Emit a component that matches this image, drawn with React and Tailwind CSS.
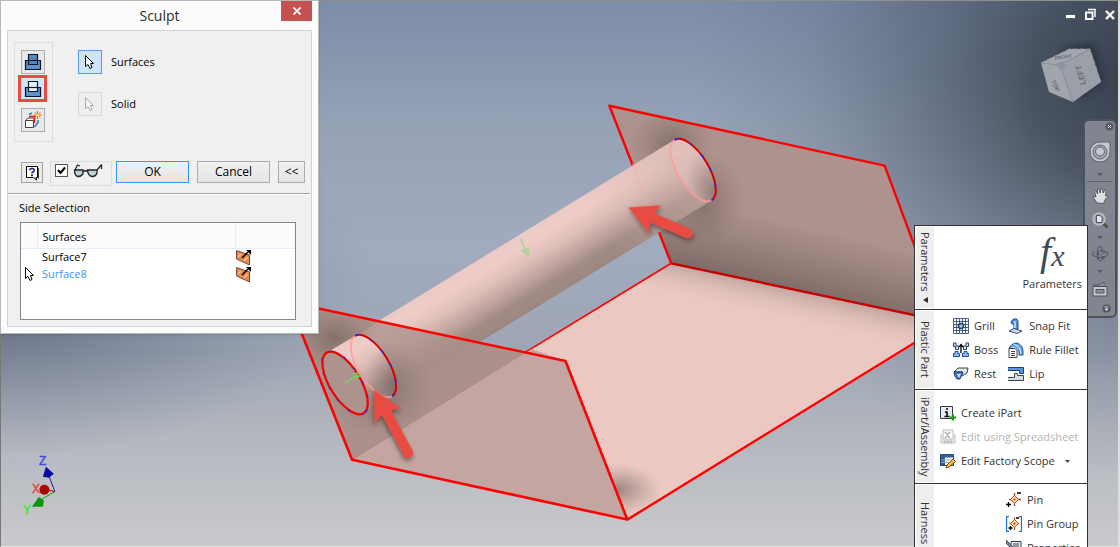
import { useState } from "react";

const BACK_PLATE = "610,105 886,165 944,321 672,263";
const FLOOR = "672,263 1000,334 1000,292 1120,220 628,520 352,460";
const FRONT_PLATE = "289,302 566,361 628,520 352,460";

function Ring({ cx, cy }) {
  return (
    <g transform={`translate(${cx} ${cy}) rotate(58.5)`} fill="none">
      <path d="M35.5 0A35.5 15.4 0 0 1 -35.5 0" stroke="#ff9a98" strokeWidth="2" opacity="0.75" />
      <path d="M-35.5 0A35.5 15.4 0 0 1 35.5 0" stroke="#d40000" strokeWidth="2" />
      <path d="M-35.5 0A35.5 15.4 0 0 1 35.5 0" stroke="#1530ff" strokeWidth="1.6" strokeDasharray="4 13 2 13" />
    </g>
  );
}

function Callout({ x, y, angle, length }) {
  return (
    <g transform={`translate(${x} ${y}) rotate(${angle})`} fill="#e94b43" filter="url(#drop)">
      <path d={`M0 0L29 -15L26 -5L${length} -5A5 5 0 0 1 ${length} 5L26 5L29 15Z`} />
    </g>
  );
}

function Scene() {
  return (
    <svg viewBox="0 0 1120 547" preserveAspectRatio="xMinYMin slice" className="block h-full w-full" role="img" aria-label="Model view">
      <defs>
        <linearGradient id="sky" x1="0" y1="0" x2="0" y2="1">
          <stop offset="0" stopColor="#7d8ca8" />
          <stop offset="0.22" stopColor="#95a1b5" />
          <stop offset="0.45" stopColor="#a1abbf" />
          <stop offset="0.64" stopColor="#9ea6b5" />
          <stop offset="0.8" stopColor="#b3b7be" />
          <stop offset="1" stopColor="#c9cacd" />
        </linearGradient>
        <radialGradient id="right" gradientUnits="userSpaceOnUse" cx="0" cy="0" r="1" gradientTransform="translate(1150 80) scale(460 400)">
          <stop offset="0" stopColor="#343d4b" stopOpacity="1" />
          <stop offset="0.25" stopColor="#3a4452" stopOpacity="0.84" />
          <stop offset="0.5" stopColor="#455061" stopOpacity="0.5" />
          <stop offset="0.75" stopColor="#4f5c70" stopOpacity="0.18" />
          <stop offset="1" stopColor="#5c6a80" stopOpacity="0" />
        </radialGradient>
        <radialGradient id="left" gradientUnits="userSpaceOnUse" cx="0" cy="0" r="1" gradientTransform="translate(-30 270) scale(400 190)">
          <stop offset="0" stopColor="#454e5e" stopOpacity="0.95" />
          <stop offset="0.5" stopColor="#556075" stopOpacity="0.45" />
          <stop offset="1" stopColor="#6a7890" stopOpacity="0" />
        </radialGradient>
        <linearGradient id="tube" gradientUnits="userSpaceOnUse" x1="500" y1="246" x2="537" y2="306">
          <stop offset="0" stopColor="#ebcac6" />
          <stop offset="0.18" stopColor="#efccc8" />
          <stop offset="0.4" stopColor="#dfbfba" />
          <stop offset="0.65" stopColor="#bda19c" />
          <stop offset="0.82" stopColor="#a28b85" />
          <stop offset="1" stopColor="#9d8781" />
        </linearGradient>
        <linearGradient id="tubeEnd" gradientUnits="userSpaceOnUse" x1="580" y1="195" x2="675" y2="140">
          <stop offset="0" stopColor="#d0b1ac" stopOpacity="0" />
          <stop offset="1" stopColor="#cdafaa" stopOpacity="0.55" />
        </linearGradient>
        <radialGradient id="shade">
          <stop offset="0" stopColor="#6b5b57" stopOpacity="0.62" />
          <stop offset="0.5" stopColor="#75645f" stopOpacity="0.3" />
          <stop offset="1" stopColor="#8a7671" stopOpacity="0" />
        </radialGradient>
        <linearGradient id="plateFoot" gradientUnits="userSpaceOnUse" x1="808" y1="226" x2="793" y2="291">
          <stop offset="0" stopColor="#75645f" stopOpacity="0" />
          <stop offset="1" stopColor="#6f5f5b" stopOpacity="0.75" />
        </linearGradient>
        <linearGradient id="floorTop" gradientUnits="userSpaceOnUse" x1="793" y1="289" x2="786" y2="321">
          <stop offset="0" stopColor="#b79d98" stopOpacity="0.8" />
          <stop offset="1" stopColor="#e3c2bd" stopOpacity="0" />
        </linearGradient>
        <filter id="drop" x="-20%" y="-20%" width="150%" height="150%">
          <feDropShadow dx="2" dy="2" stdDeviation="2" floodColor="#302020" floodOpacity="0.55" />
        </filter>
        <clipPath id="backClip"><polygon points={BACK_PLATE} /></clipPath>
        <clipPath id="floorClip"><polygon points={FLOOR} /></clipPath>
        <clipPath id="frontClip"><polygon points={FRONT_PLATE} /></clipPath>
        <clipPath id="nearTube">
          <path d="M326.5 352.7L355.5 335.7A35.5 15.4 58.5 0 1 392.5 396.3L363.5 413.3A35.5 15.4 58.5 0 0 326.5 352.7Z" />
        </clipPath>
        <clipPath id="farRing"><ellipse rx="35.5" ry="15.4" transform="translate(694 169.5) rotate(58.5)" /></clipPath>
      </defs>

      <rect width="1120" height="547" fill="url(#sky)" />
      <rect width="1120" height="547" fill="url(#right)" />
      <rect width="1120" height="547" fill="url(#left)" />

      {/* back plate */}
      <polygon points={BACK_PLATE} fill="#ad928d" />
      <g clipPath="url(#backClip)">
        <polygon points={BACK_PLATE} fill="url(#plateFoot)" />
        <ellipse cx="672" cy="144" rx="42" ry="40" fill="url(#shade)" />
        <ellipse cx="704" cy="200" rx="42" ry="50" fill="url(#shade)" />
      </g>

      {/* floor */}
      <polygon points={FLOOR} fill="#ebc8c2" />
      <polygon points={FLOOR} fill="url(#floorTop)" />
      <g clipPath="url(#floorClip)">
        <ellipse cx="618" cy="490" rx="44" ry="26" fill="url(#shade)" />
      </g>
      <g fill="none" stroke="#ff0000">
        <path d="M672 263L610 105L886 165L944 321" strokeWidth="2.4" strokeLinejoin="round" />
        <path d="M672 263L526 352" strokeWidth="1.6" />
        <path d="M672 263L944 321" stroke="#c40000" strokeWidth="2.4" />
        <path d="M628 520L1000 291" strokeWidth="2.4" />
      </g>

      {/* tube */}
      <path d="M326.5 352.7L675.5 139.2A35.5 15.4 58.5 0 1 712.5 199.8L363.5 413.3Z" fill="url(#tube)" />
      <path d="M560 210L675.5 139.2A35.5 15.4 58.5 0 1 712.5 199.8L597 270.5Z" fill="url(#tubeEnd)" />
      <g clipPath="url(#farRing)">
        <ellipse cx="694" cy="169.5" rx="35.5" ry="15.4" transform="rotate(58.5 694 169.5)" fill="#e6c5c0" opacity="0.45" />
        <ellipse cx="716" cy="194" rx="26" ry="46" transform="rotate(-20 716 194)" fill="url(#shade)" />
      </g>
      <path d="M633 163L650 207" stroke="#f6a9a6" opacity="0.6" />
      <Ring cx={694} cy={169.5} />
      <g stroke="#b9cfa0" fill="#b9cfa0">
        <path d="M521 238L526 250" strokeWidth="2" />
        <path d="M521 250L530 247L529 257Z" stroke="none" />
      </g>

      {/* front plate, the floor shows through its lower part */}
      <polygon points={FRONT_PLATE} fill="#ab918c" />
      <polygon points="352,460 532,349 566,361 628,520" fill="#c3a6a1" />
      <g clipPath="url(#frontClip)">
        <path d="M355.5 335.7L500 247L537 306L392.5 396.3Z" fill="url(#tube)" opacity="0.22" />
        <ellipse cx="334" cy="338" rx="46" ry="36" fill="url(#shade)" />
        <ellipse cx="380" cy="390" rx="56" ry="50" fill="url(#shade)" />
      </g>
      <path d="M352 460L526 352" stroke="#b98883" strokeWidth="1" />
      <path d="M289 302L566 361L628 520L352 460Z" fill="none" stroke="#ff0000" strokeWidth="2.6" strokeLinejoin="round" />

      <g clipPath="url(#nearTube)">
        <rect x="310" y="320" width="100" height="110" fill="url(#tube)" />
        <ellipse cx="398" cy="388" rx="28" ry="48" transform="rotate(-20 398 388)" fill="url(#shade)" />
      </g>
      <Ring cx={373.5} cy={366} />
      <g transform="translate(345 383) rotate(58.5)">
        <ellipse rx="35.5" ry="15.4" fill="#ad938d" stroke="#f40000" strokeWidth="2.2" />
        <ellipse rx="36.3" ry="16.2" fill="none" stroke="#1530ff" strokeWidth="1" strokeDasharray="3 12" />
      </g>
      <path d="M345 383L358 375M353 374L360 373M356 378L361 375" stroke="#79d05e" strokeWidth="1.5" />

      <Callout x={374} y={390} angle={61.5} length={72} />
      <Callout x={629} y={207} angle={23.5} length={65} />

      {/* origin triad */}
      <g fontFamily="Liberation Sans, sans-serif" fontSize="12">
        <path d="M54 492L48 476" stroke="#2020a8" />
        <path d="M54 492L40 500" stroke="#10a010" />
        <path d="M54 492L46 490" stroke="#b00000" />
        <path d="M45 467L53 474L48 478L42 477Z" fill="#0808a4" />
        <circle cx="43.5" cy="490" r="5" fill="#a80808" />
        <path d="M38 497L43 501L42 507L31 507Z" fill="#0a960a" />
        <text x="38" y="465" fill="#4646f0" stroke="#4646f0" strokeWidth="0.4">Z</text>
        <text x="31" y="493" fill="#f03c3c" stroke="#f03c3c" strokeWidth="0.4">X</text>
        <text x="22" y="514" fill="#28f028" stroke="#28f028" strokeWidth="0.4">Y</text>
      </g>
    </svg>
  );
}

function Cursor({ faded }) {
  return (
    <svg width="12" height="16" viewBox="0 0 12 16" fill={faded ? "#f4f4f4" : "#fff"} stroke={faded ? "#a9a9a9" : "#000"}>
      <path d="M1.5 1.5V12.5L4 10.5L6 14.5L8 13.5L6.5 9.5H9.5Z" />
    </svg>
  );
}

function SolidIcon({ hollow }) {
  return (
    <svg width="18" height="18" viewBox="0 0 18 18" stroke="#0b1522" strokeWidth="1.2">
      <path d="M1.500 7.500H16.500V16.500H1.500Z" fill="#5b93c8" />
      <path d="M4.500 1.500H13.500V11.500H4.500Z" fill={hollow ? "#e4f1ff" : "#5489bf"} />
      <path d="M4.500 7.500H13.500" />
    </svg>
  );
}

function NewSolidIcon() {
  return (
    <svg width="18" height="18" viewBox="0 0 18 18" fill="none">
      <path d="M1.5 9.500L4 7H11L9.500 9.500V16.500H1.500Z" fill="#fff" stroke="#444" />
      <path d="M1.500 9.500H9.500" stroke="#444" />
      <path d="M5 5.500H10.500V12" stroke="#e02020" strokeWidth="1.5" />
      <path d="M5 3.500L8 2M10.500 16L14 11.500V9" stroke="#2b7dc0" strokeWidth="1.500" />
      <path d="M13.500 0V8M9.500 4H17.500M10.700 1.200L16.300 6.800M16.300 1.200L10.700 6.800" stroke="#e46a10" />
      <circle cx="13.500" cy="4" r="1.500" fill="#ffe14a" />
    </svg>
  );
}

function FlipIcon() {
  return (
    <svg width="17" height="17" viewBox="0 0 17 17">
      <path d="M1.5 1.5L14.500 6V16L1.500 10Z" fill="#ef8446" stroke="#6a5347" />
      <path d="M3 8L6 5M9 12L13 8" stroke="#ffc49a" strokeWidth="1.500" />
      <path d="M7 9L13 3" stroke="#000" strokeWidth="1.500" />
      <path d="M11 1H16V6Z" fill="#000" />
    </svg>
  );
}

const toolButton = "flex size-6 items-center justify-center border";
const pushButton = "h-[22px] border bg-linear-to-b from-[#f1f1f1] to-[#e4e4e4] text-[12px] leading-4";

function SculptDialog() {
  const [preview, setPreview] = useState(true);

  return (
    <section className="absolute left-0 top-0 w-[319px] border border-[#b8b8b8] bg-[#fcfcfc] px-[6px] pb-[6px] font-[Open_Sans,sans-serif] text-[11px] text-black shadow-sm">
      <header className="relative flex h-[29px] items-center justify-center">
        <h1 className="text-[14px] text-[#2a2a2a]">Sculpt</h1>
        <button aria-label="Close" className="absolute right-0 top-0 flex h-5 w-[31px] items-center justify-center bg-[#c75050]">
          <svg width="8" height="8" viewBox="0 0 8 8" stroke="#fff" strokeWidth="1.7"><path d="M0.5 0.5L7.5 7.5M7.5 0.5L0.5 7.5" /></svg>
        </button>
      </header>

      <div className="border border-[#d2d2d2] bg-[#f0f0f0]">
        <div className="flex gap-[25px] pl-[6px] pt-[11px]">
          <div className="flex h-[100px] w-[39px] flex-col items-start border border-[#dcdcdc] pl-[6px] pt-[7px]">
            <button aria-label="Add" className={`${toolButton} border-[#adadad] bg-[#e9e9e9]`}><SolidIcon /></button>
            <button aria-label="Remove" className="-ml-[3px] mt-px flex h-[27px] w-[29px] items-center justify-center border-3 border-[#e94b43] bg-[#cfe6ff]"><SolidIcon hollow /></button>
            <button aria-label="New solid" className={`${toolButton} mt-[6px] border-[#adadad] bg-[#e9e9e9]`}><NewSolidIcon /></button>
          </div>
          <div className="flex flex-col gap-[18px] pt-2">
            <div className="flex items-center gap-[9px]">
              <button id="pick-surfaces" className={`${toolButton} border-[#569de5] bg-[#cfe4fb]`}><Cursor /></button>
              <label htmlFor="pick-surfaces">Surfaces</label>
            </div>
            <div className="flex items-center gap-[9px]">
              <button id="pick-solid" disabled className={`${toolButton} border-[#d6d6d6] bg-[#efefef]`}><Cursor faded /></button>
              <label htmlFor="pick-solid">Solid</label>
            </div>
          </div>
        </div>

        <div className="flex items-start pb-[7px] pl-[13px] pr-[6px] pt-[19px]">
          <button aria-label="Help" className="mt-px flex h-[21px] w-[22px] items-center justify-center border border-[#a5a5a5] bg-[#e9e9e9]">
            <svg width="15" height="16" viewBox="0 0 15 16">
              <path d="M1.5 1.5H12.5V12.5H11L11.5 15L8.5 12.5H1.5Z" fill="#ffffe6" stroke="#000" />
              <path d="M13.5 3V13.5" fill="none" stroke="#444" />
              <path d="M4.7 5.3Q4.7 3.500 7 3.500T9.300 5.500Q9.300 6.500 7 7.500V8.500" fill="none" stroke="#1818a8" strokeWidth="1.500" />
              <rect x="6" y="9.500" width="2" height="1.700" fill="#1818a8" />
            </svg>
          </button>
          <label className="ml-[7px] flex h-[25px] w-[62px] items-start gap-[5px] border border-[#dcdcdc] pl-1 pt-[2px]">
            <span className="grid size-[13px]">
              <input
                type="checkbox"
                aria-label="Preview"
                checked={preview}
                onChange={(e) => setPreview(e.target.checked)}
                className="col-start-1 row-start-1 size-[13px] appearance-none border border-[#555] bg-white"
              />
              {preview && (
                <svg width="13" height="13" viewBox="0 0 13 13" className="pointer-events-none col-start-1 row-start-1" fill="none" stroke="#000" strokeWidth="2">
                  <path d="M3 6L5.500 9L10 3.500" />
                </svg>
              )}
            </span>
            <svg width="30" height="14" viewBox="0 0 30 14" fill="#b9d3d8" stroke="#222" strokeWidth="1.3">
              <path d="M2 6L4.5 1L7 2M24 6Q28 1 28.5 1V5" fill="none" />
              <path d="M1.5 6H10V10Q8 12.5 5 12.5Q1.5 12 1.5 6ZM14.5 6H24V9Q23 12.5 19 12.5Q15 12 14.5 6ZM10 7H14.5" />
            </svg>
          </label>
          <button className={`${pushButton} ml-1 w-[73px] border-[#3399ff]`}>OK</button>
          <button className={`${pushButton} ml-2 w-[73px] border-[#adadad]`}>Cancel</button>
          <button className={`${pushButton} ml-2 w-[27px] border-[#adadad]`}>&lt;&lt;</button>
        </div>

        <div className="mr-px border-b border-t border-b-white border-t-[#a0a0a0]" />

        <div className="pb-[6px] pl-[11px] pr-3 pt-[5px]">
          <h2 className="leading-4">Side Selection</h2>
          <div className="ml-px mr-[3px] mt-[6px] h-[98px] border border-[#82868f] bg-white">
            <table className="w-full table-fixed border-collapse text-left">
              <colgroup>
                <col className="w-4" />
                <col />
                <col className="w-[60px]" />
              </colgroup>
              <thead>
                <tr className="h-[25px] border-b border-[#e5eef8] bg-[#fcfcfc]">
                  <th aria-label="Active" />
                  <th className="border-l border-[#e5eef8] pl-[5px] pt-[3px] font-normal">Surfaces</th>
                  <th aria-label="Side" className="border-l border-[#e5eef8]" />
                </tr>
              </thead>
              <tbody>
                <tr className="h-[17px] leading-4">
                  <td />
                  <td className="pl-[5px]">Surface7</td>
                  <td><FlipIcon /></td>
                </tr>
                <tr className="h-[17px] leading-4">
                  <td className="pl-[3px]"><Cursor /></td>
                  <td className="pl-[5px] text-[#3399ff]">Surface8</td>
                  <td><FlipIcon /></td>
                </tr>
              </tbody>
            </table>
          </div>
        </div>
      </div>
    </section>
  );
}

const PANEL_ICONS = {
  grill: (
    <>
      <path d="M0.5 0.5H15.5V15.5H0.5ZM0.5 3.5H15.5M0.5 6.5H15.5M0.5 9.5H15.5M0.5 12.5H15.5M3.5 0.5V15.5M6.5 0.5V15.5M9.5 0.5V15.5M12.5 0.5V15.5" fill="#f4f8ff" stroke="#26405f" strokeWidth="0.8" />
      <circle cx="8" cy="8" r="2.5" fill="#a9c6ec" stroke="#26405f" strokeWidth="1.5" />
    </>
  ),
  boss: (
    <>
      <path d="M0.5 1V4.500H2.500V7.500H5.500V4H3V1ZM15.500 1V4.500H13.500V7.500H10.500V4H13V1Z" fill="#dce8f7" stroke="#26405f" />
      <path d="M8 11V3M6 5L8 2.500L10 5" fill="none" stroke="#000" strokeWidth="1.300" />
      <path d="M0.500 14.500V11.500H2V9.500H5V11.500H6.500V14.500ZM15.500 14.500V11.500H14V9.500H11V11.500H9.500V14.500Z" fill="#8eb6ec" stroke="#1f4f9f" />
    </>
  ),
  rest: (
    <>
      <path d="M1 6L5 2H15L14 7L9 10V6Z" fill="#dfe4ea" stroke="#3a4654" />
      <path d="M1 6H10L7 13H4Q1 10 1 6Z" fill="#3f7fd0" stroke="#1e3f74" />
      <path d="M4 8H8L6 12Z" fill="#d5e8ff" />
    </>
  ),
  snap: (
    <>
      <path d="M6 1Q10 0 10 4V11L6 12V7L3 5Q3 2 6 1Z" fill="#4f8edb" stroke="#1f4f8f" />
      <path d="M7 3V10" stroke="#cfe4ff" strokeWidth="1.5" />
      <path d="M1 13L6 10.500L14 13L9 15.500Z" fill="#c9dcf2" stroke="#3a4f68" />
    </>
  ),
  fillet: (
    <>
      <path d="M1 7Q3 1 9 1Q15 3 15 10V13H11V9Z" fill="#6ca3e8" stroke="#1f4f8f" />
      <path d="M3 7Q7 3 10 10M6 2Q12 4 13 12" fill="none" stroke="#e0efff" />
      <path d="M1 6.5H7L9 8.5V15.5H1Z" fill="#fff" stroke="#444" />
      <path d="M3 9.5H7M3 11.5H7M3 13.5H7" stroke="#444" />
    </>
  ),
  lip: (
    <>
      <path d="M0 1.500H15.500V7.500H11.500V4.500H0" fill="#5a93dc" stroke="#1f3f6f" />
      <path d="M0 14.500H15.500V9.500H9.500V7.500H6.500V11.500H0" fill="#d7dce1" stroke="#3b4652" />
    </>
  ),
  ipart: (
    <>
      <path d="M0.500 1.500H12.500V13.500H0.500Z" fill="#e9edf2" stroke="#333e4b" />
      <path d="M6 4H8M5 7H7V11M4.500 11.500H9.500" fill="none" stroke="#000" strokeWidth="1.500" />
      <path d="M13 9.500V15.500M10 12.500H16" stroke="#12a012" strokeWidth="2.200" />
    </>
  ),
  sheet: (
    <>
      <path d="M3 1H13V10H3ZM1 5V14H15V5M3 12H13" fill="#f5f5f5" stroke="#bababa" />
      <path d="M5 3L10 9M10 3L5 9M5 12V14M8 12V14M11 12V14" stroke="#b0b0b0" strokeWidth="1.3" />
    </>
  ),
  scope: (
    <>
      <path d="M0.500 1.500H13.500V12.500H0.500Z" fill="#fff" stroke="#24405f" />
      <path d="M1 1.500H13.500V4.500H5V12H1Z" fill="#335f94" />
      <path d="M5 7H13M5 9.500H11M1 7H5M1 9.500H5" stroke="#8fabca" />
      <path d="M6 15L7 12L13 6L15.500 8.500L9 14Z" fill="#f6bd3d" stroke="#7b5010" />
    </>
  ),
  pin: (
    <>
      <path d="M8.500 1V14M3 7.500H15" stroke="#8b4a2c" strokeWidth="1.3" />
      <path d="M8.500 3.500L12.500 7.500L8.500 11.500L4.500 7.500Z" fill="#ffd2a0" stroke="#c2521c" />
      <circle cx="8.500" cy="7.500" r="1" fill="#8b4a2c" />
      <path d="M0 12.500H5M2.500 10V15M11 1H15" stroke="#000" strokeWidth="1.3" />
    </>
  ),
  pinGroup: (
    <>
      <path d="M8.500 1.500V14M3.500 7.500H13" stroke="#8b4a2c" strokeWidth="1.3" />
      <path d="M8.500 3.500L12.500 7.500L8.500 11.500L4.500 7.500Z" fill="#ffd2a0" stroke="#c2521c" />
      <circle cx="8.500" cy="7.500" r="1" fill="#8b4a2c" />
      <path d="M2.500 12H6.500M4.500 10V14M10 2H13" stroke="#000" strokeWidth="1.3" />
      <path d="M3 0.500H0.500V15.500H3M13 0.500H15.500V15.500H13" fill="none" stroke="#1976d8" strokeWidth="1.3" />
    </>
  ),
  props: (
    <>
      <path d="M5 1.500H15V15H5Z" fill="#e9edf2" stroke="#39434f" />
      <path d="M7 4H13M7 6H13M7 8H13" stroke="#39434f" />
      <path d="M0 0L7 7V10L0 3Z" fill="#8492a2" stroke="#39434f" />
    </>
  ),
};

function Command({ icon, label, menu, disabled }) {
  return (
    <button disabled={disabled} className="flex h-6 items-center gap-[5px] whitespace-nowrap text-[#333] disabled:text-[#b4b4b4]">
      <svg width="16" height="16" viewBox="0 0 16 16" className="shrink-0">{PANEL_ICONS[icon]}</svg>
      {label}
      {menu && <svg width="5" height="3" viewBox="0 0 5 3" className="ml-[5px]" fill="#444"><path d="M0 0H5L2.5 3Z" /></svg>}
    </button>
  );
}

function PanelSection({ title, arrow, className, children }) {
  return (
    <section className={`flex border-b border-[#333] p-px ${className}`}>
      <h2 className="flex w-[18px] shrink-0 items-center justify-center gap-[6px] bg-[#eeeeee] text-[#333] [writing-mode:vertical-rl]">
        {title}
        {arrow && <svg width="5" height="6" viewBox="0 0 5 6" fill="#333"><path d="M5 0V6L0 3Z" /></svg>}
      </h2>
      {children}
    </section>
  );
}

function ToolPanel() {
  return (
    <aside className="absolute right-8 top-[225px] w-[174px] border border-[#333] bg-white font-[Open_Sans,sans-serif] text-[11px] leading-4">
      <PanelSection title="Parameters" arrow className="h-[84px]">
        <button className="ml-auto flex flex-col items-center justify-end pb-4 pr-1 text-[#333]">
          <span className="flex items-end pb-1 font-[Liberation_Serif,serif] italic text-[#3f4a57]">
            <span className="text-[40px] leading-10">f</span>
            <span className="text-[30px] leading-8">x</span>
          </span>
          Parameters
        </button>
      </PanelSection>
      <PanelSection title="Plastic Part" className="h-20">
        <div className="ml-[19px] grid grid-cols-[auto_auto] content-center gap-x-[10px]">
          <Command icon="grill" label="Grill" />
          <Command icon="snap" label="Snap Fit" />
          <Command icon="boss" label="Boss" />
          <Command icon="fillet" label="Rule Fillet" />
          <Command icon="rest" label="Rest" />
          <Command icon="lip" label="Lip" />
        </div>
      </PanelSection>
      <PanelSection title="iPart/iAssembly" className="h-[94px]">
        <div className="ml-[6px] pt-[10px]">
          <Command icon="ipart" label="Create iPart" />
          <Command icon="sheet" label="Edit using Spreadsheet" disabled />
          <Command icon="scope" label="Edit Factory Scope" menu />
        </div>
      </PanelSection>
      <PanelSection title="Harness" className="h-20">
        <div className="ml-[72px] pt-[3px]">
          <Command icon="pin" label="Pin" />
          <Command icon="pinGroup" label="Pin Group" />
          <Command icon="props" label="Properties" />
        </div>
      </PanelSection>
    </aside>
  );
}

function Caret() {
  return <svg width="6" height="3" viewBox="0 0 6 3" fill="#555b66"><path d="M0 0H6L3 3Z" /></svg>;
}

function NavBar() {
  return (
    <nav className="absolute right-[3px] top-[119px] flex h-[199px] w-[34px] flex-col items-center rounded-md border-2 border-[#4c535f] bg-[#80858f]">
      <button aria-label="Close bar" className="mr-px mt-px self-end">
        <svg width="9" height="9" viewBox="0 0 9 9"><circle cx="4.5" cy="4.5" r="4" fill="#555b65" /><path d="M3 3L6 6M6 3L3 6" stroke="#ddd" /></svg>
      </button>
      <button aria-label="Steering wheel" className="mt-[10px]">
        <svg width="22" height="22" viewBox="0 0 22 22" stroke="#5c626c">
          <path d="M11 1H19Q21 1 21 3V11A10 10 0 1 1 11 1Z" fill="#c5c8cc" />
          <circle cx="11" cy="11" r="7" fill="#a4a8af" />
          <circle cx="11" cy="10.5" r="4.500" fill="#c4c7cb" />
        </svg>
      </button>
      <span className="mt-[10px]"><Caret /></span>
      <span className="mt-[5px] w-[26px] border-b border-[#5b616b]" />
      <button aria-label="Pan" className="mt-[5px]">
        <svg width="17" height="18" viewBox="0 0 17 18" fill="#dcdee0" stroke="#555a63">
          <path d="M5 16L1 10Q1 8 4 10L2.5 4Q4 2 5.5 7L5.5 2Q7 0 8 6L9 1.5Q11 0 11 6L12.5 3Q14.5 3 13.5 9L15 8Q17 8 13 13L11.5 16.5Z" />
        </svg>
      </button>
      <button aria-label="Zoom" className="mt-[7px]">
        <svg width="17" height="17" viewBox="0 0 17 17">
          <path d="M10 10L15.5 15.5" stroke="#5a4d45" strokeWidth="3" />
          <circle cx="7" cy="7" r="6" fill="#9da2a9" stroke="#c2c5c9" strokeWidth="1.2" />
          <path d="M4.5 3.5H8L10 5.5V10.5H4.5Z" fill="#e2e4e6" stroke="#4b515b" />
        </svg>
      </button>
      <span className="mt-[7px]"><Caret /></span>
      <button aria-label="Orbit" className="mt-[6px]">
        <svg width="18" height="18" viewBox="0 0 18 18" fill="none" stroke="#4e555f">
          <path d="M7 15Q5 9 7 3Q9 -1 11 4V6M14 13Q8 13 3 11Q-1 9 4 7M7 6Q14 5 17 8Q18 11 12 12M7 12Q9 19 12 14V11M10 10L12 12L10 14" />
          <path d="M6 9H9M7.5 7.5V10.5M11 8H14" />
        </svg>
      </button>
      <span className="mt-[7px]"><Caret /></span>
      <button aria-label="Look at" className="mt-2">
        <svg width="16" height="16" viewBox="0 0 16 16" stroke="#4c525c">
          <path d="M1 4H7L12 1V4" fill="#a4a8ae" />
          <path d="M1 5.5H15V15H1Z" fill="#c3c6ca" />
          <path d="M4 8.5H12V12H4Z" fill="#8b9098" />
        </svg>
      </button>
      <button aria-label="Customize" className="mb-[3px] mr-1 mt-auto self-end">
        <svg width="9" height="9" viewBox="0 0 9 9"><circle cx="4.5" cy="4.5" r="4" fill="#50565f" /><path d="M2.5 3H6.5M3 5H6L4.5 6.5Z" fill="#ddd" stroke="#ddd" /></svg>
      </button>
    </nav>
  );
}

function ViewCube() {
  return (
    <svg width="72" height="72" viewBox="0 0 72 72" className="absolute right-2 top-10" role="img" aria-label="View cube">
      <defs><filter id="cubeBlur"><feGaussianBlur stdDeviation="3" /></filter></defs>
      <path d="M22 8L54 4L64 42L40 60Z" fill="#202632" opacity="0.6" filter="url(#cubeBlur)" />
      <path d="M1 23L29 9H50L20 25Z" fill="#a3a7ad" />
      <path d="M20 25L50 9L61 42L33 62Z" fill="#9b9fa7" />
      <path d="M1 23L20 25L33 62L9 52Z" fill="#a1a5ac" />
      <path d="M1 23L20 25L50 9M20 25L33 62M1 23L29 9H50L61 42" fill="none" stroke="#8a9099" strokeDasharray="5 2" />
      <path d="M16 24L22 21L27 27L21 31Z" fill="#8b95a6" />
      <g fontFamily="Liberation Sans, sans-serif" fontWeight="700" fill="#6a707a">
        <text transform="translate(46 44) rotate(-105)" fontSize="8">LEFT</text>
        <text transform="translate(11 41) rotate(65)" fontSize="6">TOP</text>
        <text transform="translate(15 20) rotate(-8)" fontSize="5">FRONT</text>
      </g>
    </svg>
  );
}

function WindowButtons() {
  return (
    <div className="absolute right-1 top-2 flex items-center gap-[7px]">
      <button aria-label="Minimize"><svg width="13" height="12" viewBox="0 0 13 12"><path d="M1 8H12" stroke="#525861" strokeWidth="5" /><path d="M2 7.5H11" stroke="#fff" strokeWidth="3" /></svg></button>
      <button aria-label="Restore"><svg width="13" height="13" viewBox="0 0 13 13" fill="none" stroke="#fff" strokeWidth="1.5"><path d="M4 1.5H11V9" /><path d="M2 4.5H8.5V11H2Z" strokeWidth="2" /></svg></button>
      <button aria-label="Close document"><svg width="12" height="12" viewBox="0 0 12 12" fill="none"><path d="M2 2L10 10M10 2L2 10" stroke="#555" strokeWidth="4" /><path d="M2 2L10 10M10 2L2 10" stroke="#fff" strokeWidth="2.2" /></svg></button>
    </div>
  );
}

export default function App() {
  return (
    <main className="relative h-screen overflow-hidden">
      <div className="h-full border-b border-l border-r-2 border-t border-b-[#e3e3e3] border-l-[#777] border-r-[#dedede] border-t-[#8f8f8b]">
        <Scene />
      </div>
      <WindowButtons />
      <ViewCube />
      <NavBar />
      <ToolPanel />
      <SculptDialog />
    </main>
  );
}
